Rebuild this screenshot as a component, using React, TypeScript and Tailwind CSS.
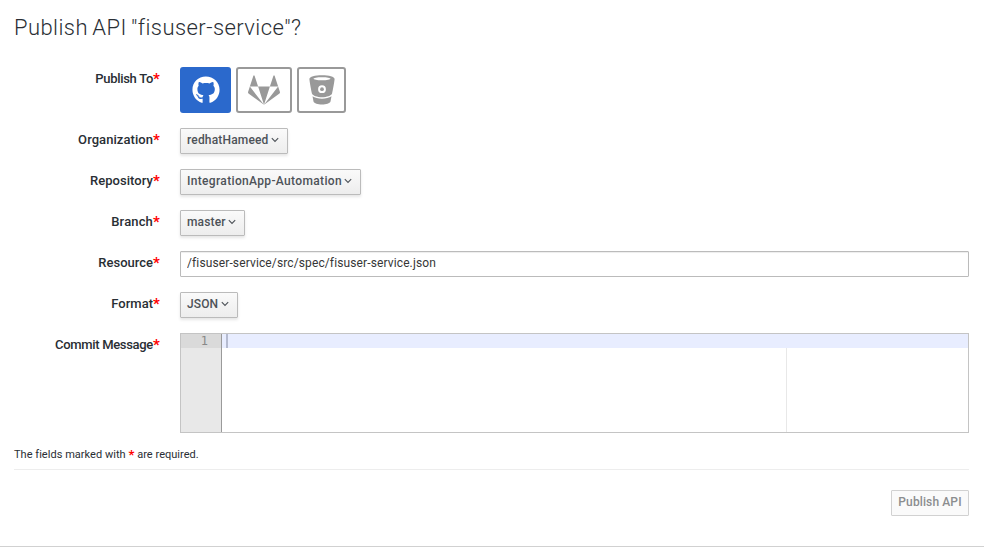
import type { ReactNode } from "react";
import { FaGithub } from "react-icons/fa";

function Row({ label, spacing, children }: { label: string; spacing: string; children: ReactNode }) {
  return (
    <div className="flex items-start gap-5">
      <label className={`w-[146px] shrink-0 pt-[3px] text-right text-[13px] leading-[18px] font-medium whitespace-nowrap text-[#292e34] ${spacing}`}>
        {label}
        <span className="inline-block w-[7px] translate-y-px text-center text-[15px] leading-[14px] font-bold tracking-normal text-[#ff0000]">*</span>
      </label>
      {children}
    </div>
  );
}

function Chevron() {
  return (
    <svg width="8" height="6" viewBox="0 0 8 6" fill="none" stroke="#4d5258" strokeWidth="1.1" className="shrink-0">
      <path d="M0.8 1.2 4 4.4 7.2 1.2" />
    </svg>
  );
}

function Dropdown({ text, box, spacing }: { text: string; box: string; spacing: string }) {
  return (
    <button type="button" className={`flex h-[26px] items-center justify-between rounded-[1px] border border-[#bbbbbb] bg-linear-to-b from-[#fafafa] to-[#ededed] pr-[8px] pb-[2px] pl-[6px] text-[12px] font-medium whitespace-nowrap text-[#4d5258] shadow-[0_2px_3px_rgba(3,3,3,0.1)] ${box}`}>
      <span className={spacing}>{text}</span>
      <Chevron />
    </button>
  );
}

function GitlabLogo() {
  return (
    <svg width="32" height="32" viewBox="0 0 1792 1792" fill="#999999" className="shrink-0">
      <path d="M104 706l792 1015-868-630q-18-13-25-35t0-43zm462 0h660l-330 1015zM368 94l198 612H104L302 94q8-23 33-23t33 23zm1320 612 101 307q7 21 0 43t-25 35l-868 630zm0 0h-462l198-612q8-23 33-23t33 23z" />
    </svg>
  );
}

function BitbucketLogo() {
  return (
    <svg width="26" height="30" viewBox="0 0 26 30" fill="#999999" className="shrink-0">
      <path fillRule="evenodd" d="M13 0.3C6 0.3 0.4 1.8 0.4 4.1 0.6 6.8 2.2 15.6 3 18.7 4 20.5 8 22.2 13 22.2S22 20.5 23 18.7C23.8 15.6 25.4 6.8 25.6 4.1 25.6 1.8 20 0.3 13 0.3ZM13 2.2C18 2.2 21.5 2.9 21.5 3.8S18 5.3 13 5.3 4.5 4.7 4.5 3.8 8 2.2 13 2.2ZM13 10.3A3.9 3.9 0 1 1 13 18.1 3.9 3.9 0 1 1 13 10.3Z" />
      <circle cx="13" cy="14.2" r="1.9" />
      <path d="M3.5 21.3C8 24.6 18 24.6 22.5 21.3L21.5 26.6C20.7 28.5 17.3 29.6 13 29.6S5.3 28.5 4.5 26.6Z" />
    </svg>
  );
}

export default function App() {
  return (
    <div className="h-[547px] w-full overflow-hidden border-b border-[#d1d1d1] bg-white pr-[15px] pl-[14px] font-[Roboto,sans-serif] text-[#292e34]">
      <h1 className="pt-[14px] text-[22px] leading-[28px] font-light tracking-[0.43px] whitespace-nowrap [word-spacing:-1.5px]">
        Publish API "fisuser-service"?
      </h1>
      <form className="flex flex-col gap-[15px] pt-[25px]">
        <Row label="Publish To" spacing="tracking-[-0.3px]">
          <div className="flex h-[46px] gap-[5px]">
            <button type="button" className="flex w-[51px] items-center justify-center rounded-[3px] bg-[#2b69cc] text-white">
              <FaGithub size={28} />
            </button>
            <button type="button" className="flex w-[56px] items-center justify-center rounded-[3px] border-2 border-[#999999]">
              <GitlabLogo />
            </button>
            <button type="button" className="flex w-[49px] items-center justify-center rounded-[3px] border-2 border-[#999999]">
              <BitbucketLogo />
            </button>
          </div>
        </Row>
        <Row label="Organization" spacing="tracking-[0.06px]">
          <Dropdown text="redhatHameed" box="w-[108px]" spacing="tracking-[0.17px]" />
        </Row>
        <Row label="Repository" spacing="tracking-[0.06px]">
          <Dropdown text="IntegrationApp-Automation" box="w-[181px]" spacing="tracking-[0.34px]" />
        </Row>
        <Row label="Branch" spacing="tracking-[0.15px]">
          <Dropdown text="master" box="w-[65px]" spacing="tracking-[0.15px]" />
        </Row>
        <Row label="Resource" spacing="tracking-normal">
          <input
            type="text"
            defaultValue="/fisuser-service/src/spec/fisuser-service.json"
            className="h-[26px] min-w-0 flex-1 rounded-[1px] border border-[#bbbbbb] bg-white px-[6px] pb-[2px] text-[12px] tracking-[0.12px] text-[#363636] shadow-[inset_0_1px_1px_rgba(3,3,3,0.075)]"
          />
        </Row>
        <Row label="Format" spacing="tracking-normal">
          <Dropdown text="JSON" box="w-[58px]" spacing="tracking-[0.1px]" />
        </Row>
        <Row label="Commit Message" spacing="tracking-[-0.32px]">
          <div className="flex h-[100px] flex-1 border border-[#c4c4c4] bg-white">
            <div className="w-[41px] border-r border-[#9a9a9a] bg-[#e8e8e8]">
              <div className="h-[14px] bg-[#dadada] pr-[13px] text-right font-['DejaVu_Sans_Mono',monospace] text-[12px] leading-[14px] text-[#888888]">1</div>
            </div>
            <div className="flex flex-1 flex-col">
              <div className="h-[14px] bg-[#e8edff] pl-[4px]">
                <div className="h-[14px] w-[2px] bg-[#b5bbd0]" />
              </div>
              <div className="w-[565px] flex-1 border-r border-[#e8e8e8]" />
            </div>
          </div>
        </Row>
      </form>
      <p className="mt-[14px] h-[23px] border-b border-[#ededed] pt-px text-[11px] leading-[14px] tracking-[0.03px]">
        The fields marked with <span className="inline-block w-[6px] translate-y-px text-center text-[13px] leading-[12px] font-bold text-[#ff0000]">*</span> are required.
      </p>
      <div className="mt-[20px] flex justify-end">
        <button disabled className="h-[26px] w-[78px] rounded-[1px] border border-[#d1d1d1] bg-[#fafafa] pb-[2px] text-[12px] font-medium tracking-[0.12px] whitespace-nowrap text-[#8b8d8f]">
          Publish API
        </button>
      </div>
    </div>
  );
}
